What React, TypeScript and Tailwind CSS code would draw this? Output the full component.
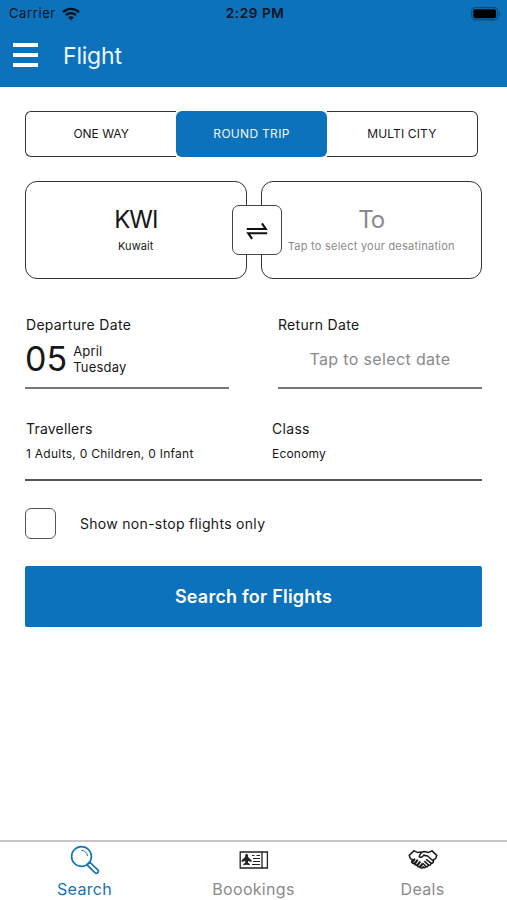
import { useState } from 'react';

type TripType = 'oneway' | 'round' | 'multi';
type NavKey = 'search' | 'bookings' | 'deals';

const tripTypes: { key: TripType; label: string }[] = [
  { key: 'oneway', label: 'ONE WAY' },
  { key: 'round', label: 'ROUND TRIP' },
  { key: 'multi', label: 'MULTI CITY' },
];

const inactiveTrip: Record<TripType, string> = {
  oneway: 'rounded-l-[6px] border-l-[1.500px]',
  round: '',
  multi: 'rounded-r-[6px] border-r-[1.500px] tracking-[0.15px]',
};

function WifiIcon() {
  return (
    <svg width="18" height="14" viewBox="0 0 18 14" fill="none" stroke="#03121d" strokeWidth="2.3">
      <path d="M1 5.100C5.500.7 12.500.7 17 5.100" />
      <path d="M3.900 8.200C6.800 5.400 11.200 5.400 14.100 8.200" />
      <path d="M9 13.300 6.200 10.400C7.800 9 10.200 9 11.800 10.400Z" fill="#03121d" stroke="none" />
    </svg>
  );
}

function BatteryIcon() {
  return (
    <svg width="30" height="14" viewBox="0 0 30 14">
      <rect x="0.700" y="0.700" width="26" height="12.100" rx="3.600" fill="none" stroke="#084d7e" strokeWidth="1.200" />
      <rect x="2.300" y="2.300" width="22.800" height="8.900" rx="2.200" fill="#000" />
      <path d="M28 4.800c1.400.5 1.400 3.400 0 3.900z" fill="#084d7e" />
    </svg>
  );
}

function SwapIcon() {
  return (
    <svg width="22" height="18" viewBox="0 0 22 18" fill="none" stroke="#111" strokeWidth="2.100">
      <path d="M.8 7H19.800L15.900 1.300" />
      <path d="M21.200 11.200H2.200L6.100 16.900" />
    </svg>
  );
}

function SearchIcon() {
  return (
    <svg width="30" height="30" viewBox="0 0 30 30" fill="none" stroke="#1673b7" strokeWidth="1.700">
      <circle cx="11.500" cy="11.500" r="9.900" />
      <path d="M11.300 5.300c3.300 0 6 2.600 6.200 5.800" strokeWidth="1" />
      <path d="m16.800 19.600 2.800-2.600 8.200 7.800c1.700 1.900-1 4.700-2.900 2.900z" strokeLinejoin="round" />
    </svg>
  );
}

function TicketIcon() {
  return (
    <svg width="30" height="18" viewBox="0 0 30 18" fill="none" stroke="#222" strokeWidth="1.300">
      <path d="M1.200 1H28.400V17H1.200Z" />
      <path d="M23 1V17" />
      <path d="M13 4.500h2.500M17.500 4.500h3.500M14 7.500h7M14 10.500h7M13 13.500h8" strokeWidth="1.100" />
      <path
        d="M7.600 2.800c1 0 1.400 1 1.400 2v1.200l3.600 3.200v1.800l-3.600-.9v1.700l1.800 1.300v1.200l-3.200-.5-3.200.5v-1.200l1.800-1.300v-1.700l-3.600.9V9.200l3.600-3.200V4.800c0-1 .4-2 1.400-2z"
        fill="#222"
        stroke="none"
      />
    </svg>
  );
}

function HandshakeIcon() {
  return (
    <svg width="30" height="20" viewBox="0 0 30 20" fill="none" stroke="#1c1c1c" strokeWidth="1.500" strokeLinejoin="round" strokeLinecap="round">
      <path d="M6 .9 1.200 5.400 2.400 8.600 4.600 9.600" />
      <path d="M24 .9 28.800 5.400 27.600 8.600 25.400 9.600" />
      <path d="M6 .9 9.400 2.400 13.300 2.100M24 .9 20.800 2.400 16 1.500C13.800 1.600 11.600 4.200 11.200 6.800c1.900 1.100 3.600 0 4.600-1.800 1.600.9 2.700 1 3.500.7l5.600 5" />
      <path d="M4.600 9.600 3.700 11.800c.2 1.700 1.600 1.900 2.700 1.200-.1 1.900 1.300 2.500 2.700 1.700 0 1.900 1.400 2.600 2.600 1.700.4 1.600 1.900 2.100 3 1.200l.8-.8" />
      <path d="m4.800 11.600 1.600-2.300M7.100 13.300l2-3M9.600 15.200l2.100-3M12.200 16.800l1.900-2.700" strokeWidth="2.100" />
      <path d="M25.400 9.600c.9 2.500-.7 4-2.400 3.500.1 1.700-1.200 2.500-2.600 1.800-.2 1.600-1.300 2.200-2.500 1.500-.6 1.400-1.800 1.700-3.100 1" />
      <path d="m18.600 9.600 4.400 3.500M16.800 11.600l3.600 3.300M15.300 13.700l2.600 2.700" />
    </svg>
  );
}

const navItems: { key: NavKey; label: string; icon: React.ReactNode }[] = [
  { key: 'search', label: 'Search', icon: <SearchIcon /> },
  { key: 'bookings', label: 'Boookings', icon: <TicketIcon /> },
  { key: 'deals', label: 'Deals', icon: <HandshakeIcon /> },
];

export default function App() {
  const [trip, setTrip] = useState<TripType>('round');
  const [nav, setNav] = useState<NavKey>('search');
  const [nonStop, setNonStop] = useState(false);

  return (
    <div className="flex h-[900px] w-[507px] flex-col bg-white font-['Inter',sans-serif] text-[#171717]">
      <header className="h-[87px] bg-[#0b72bb]">
        <div className="grid h-[27px] grid-cols-3 items-center pr-[6px] pl-[9px] text-[13px] text-[#03121d]">
          <div className="flex items-center gap-[6px]">
            <span className="tracking-[0.6px]">Carrier</span>
            <WifiIcon />
          </div>
          <span className="text-center text-[13.500px] font-semibold tracking-[0.6px]">2:29 PM</span>
          <div className="flex justify-end">
            <BatteryIcon />
          </div>
        </div>
        <div className="flex h-[56px] items-center pl-[13px]">
          <button className="mb-[1px] flex w-[25px] flex-col gap-[6px]" aria-label="Menu">
            <span className="h-[4px] bg-white" />
            <span className="h-[4px] bg-white" />
            <span className="h-[4px] bg-white" />
          </button>
          <h1 className="ml-[25px] pt-[2px] text-[23px] leading-[28px] tracking-[-0.2px] text-[#eef6fc]">Flight</h1>
        </div>
      </header>

      <main className="flex-1 px-[25px] pt-[24px]">
        {/* Trip type */}
        <div className="flex h-[46px] w-[453px]">
          {tripTypes.map(({ key, label }) => (
            <button
              key={key}
              onClick={() => setTrip(key)}
              className={`flex-1 text-[12px] ${
                trip === key
                  ? 'rounded-[6px] bg-[#0b72bb] tracking-[0.3px] text-[#eef6fc]'
                  : `border-y-[1.500px] border-[#333] ${inactiveTrip[key]}`
              }`}
            >
              {label}
            </button>
          ))}
        </div>

        {/* Origin and destination */}
        <div className="relative mt-[24px] flex gap-[14px]">
          <button className="flex h-[98px] flex-1 flex-col items-center rounded-[12px] border-[1.500px] border-[#333] pt-[23px]">
            <span className="text-[24px] leading-[30px] tracking-[-1px]">KWI</span>
            <span className="mt-[3px] text-[11px] leading-[16px] tracking-[0.100px]">Kuwait</span>
          </button>
          <button className="flex h-[98px] flex-1 flex-col items-center rounded-[12px] border-[1.500px] border-[#333] pt-[23px] text-[#8a8a8a]">
            <span className="text-[24px] leading-[30px] tracking-[-1px]">To</span>
            <span className="mt-[3px] text-[11px] leading-[16px] tracking-[0.240px]">Tap to select your desatination</span>
          </button>
          <button
            aria-label="Swap"
            className="absolute top-[24px] left-[207px] flex h-[50px] w-[50px] items-center justify-center rounded-[7px] border-[1.500px] border-[#444] bg-white pt-[1px]"
          >
            <SwapIcon />
          </button>
        </div>

        {/* Dates */}
        <div className="mt-[36px] flex justify-between">
          <div className="h-[74px] w-[204px] border-b-2 border-[#777] pl-[1px]">
            <div className="text-[14px] leading-[20px] tracking-[0.3px]">Departure Date</div>
            <div className="flex items-center gap-[6px]">
              <span className="-ml-[1px] text-[34px] leading-[48px]">05</span>
              <span className="text-[13px] leading-[16px] tracking-[0.2px]">
                April
                <br />
                Tuesday
              </span>
            </div>
          </div>
          <div className="h-[74px] w-[204px] border-b-2 border-[#777]">
            <div className="text-[14px] leading-[20px] tracking-[0.3px]">Return Date</div>
            <div className="text-center text-[16px] leading-[48px] tracking-[0.350px] text-[#8a8a8a]">Tap to select date</div>
          </div>
        </div>

        {/* Travellers and cabin class */}
        <div className="mt-[30px] flex h-[62px] border-b-2 border-[#555]">
          <div className="w-[247px] pl-[1px]">
            <div className="text-[14px] leading-[20px] tracking-[0.2px]">Travellers</div>
            <div className="mt-[7px] text-[12px] leading-[16px] tracking-[0.270px]">1 Adults, 0 Children, 0 Infant</div>
          </div>
          <div>
            <div className="text-[14px] leading-[20px] tracking-[0.3px]">Class</div>
            <div className="mt-[7px] text-[12px] leading-[16px] tracking-[0.2px]">Economy</div>
          </div>
        </div>

        <label className="mt-[27px] flex items-center gap-[24px]">
          <input
            type="checkbox"
            checked={nonStop}
            onChange={(e) => setNonStop(e.target.checked)}
            className="h-[31px] w-[31px] appearance-none rounded-[6px] border border-[#555] checked:bg-[#0b72bb]"
          />
          <span className="text-[14px] tracking-[0.3px]">Show non-stop flights only</span>
        </label>

        <button className="mt-[27px] h-[61px] w-full rounded-[2px] bg-[#0b72bb] text-[18px] font-semibold tracking-[0.220px] text-white">
          Search for Flights
        </button>
      </main>

      <nav className="grid h-[60px] grid-cols-3 border-t-2 border-[#c6c6c6]">
        {navItems.map(({ key, label, icon }) => (
          <button key={key} onClick={() => setNav(key)} className="flex flex-col items-center">
            <span className="flex h-[36px] items-center">{icon}</span>
            <span
              className={`mt-[1px] text-[16px] leading-[20px] tracking-[0.3px] ${
                nav === key ? 'text-[#1673b7]' : 'text-[#8a8a8a]'
              }`}
            >
              {label}
            </span>
          </button>
        ))}
      </nav>
    </div>
  );
}
